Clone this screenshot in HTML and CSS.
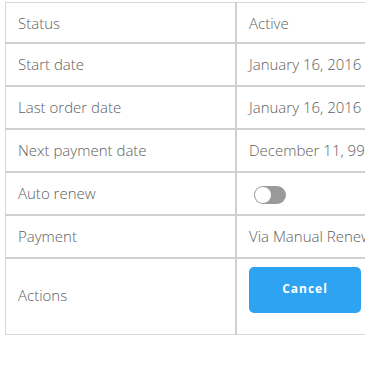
FILE: index.html
```html
<!DOCTYPE html>
<html>
<head>
    <title>Subscription</title>
    <link rel="stylesheet" href="styles.css">
</head>
<body>
    <div class="wrap">
        <table class="details">
            <tr>
                <td class="label">Status</td>
                <td>Active</td>
            </tr>
            <tr>
                <td class="label">Start date</td>
                <td>January 16, 2016</td>
            </tr>
            <tr>
                <td class="label">Last order date</td>
                <td>January 16, 2016</td>
            </tr>
            <tr>
                <td class="label">Next payment date</td>
                <td>December 11, 9999</td>
            </tr>
            <tr class="short">
                <td class="label">Auto renew</td>
                <td><span class="toggle"><span class="knob"></span></span></td>
            </tr>
            <tr>
                <td class="label">Payment</td>
                <td>Via Manual Renewal</td>
            </tr>
            <tr>
                <td class="label actions">Actions</td>
                <td class="actions"><button class="btn">Cancel</button></td>
            </tr>
        </table>
    </div>
</body>
</html>
```

FILE: styles.css
```css
body {
    margin: 0;
    font-family: "Open Sans", Arial, sans-serif;
    background: #fff;
}

.wrap {
    width: 365px;
    height: 369px;
    overflow: hidden;
    padding: 2px 0 0 5px;
    box-sizing: border-box;
}

.details {
    border-collapse: collapse;
    width: 430px;
    border: 1px solid #d8d8d8;
    font-size: 15px;
    font-weight: 300;
    color: #5e5e5e;
}

.details td {
    padding: 10px 12px 11px 12px;
    line-height: 20px;
    height: 20px;
    border-top: 2px solid #d0d0d0;
    white-space: nowrap;
    vertical-align: middle;
}

.details tr:first-child td {
    border-top: 1px solid #d8d8d8;
    padding-bottom: 9px;
}

.details tr.short td {
    padding-bottom: 10px;
}

.details td.label {
    width: 205px;
    border-right: 2px solid #d0d0d0;
}

.details td.actions {
    padding-top: 8px;
    padding-bottom: 21px;
}

.details td.label.actions {
    padding-bottom: 10px;
}

.toggle {
    display: inline-block;
    position: relative;
    width: 32px;
    height: 18px;
    border-radius: 9px;
    background: #9a9a9a;
    vertical-align: middle;
    margin-left: 5px;
}

.knob {
    position: absolute;
    left: 1px;
    top: 1px;
    width: 16px;
    height: 16px;
    border-radius: 50%;
    background: #fff;
}

.btn {
    width: 112px;
    height: 46px;
    border: none;
    border-radius: 5px;
    background: #2ea3f2;
    color: #fff;
    font-family: "Open Sans", Arial, sans-serif;
    font-weight: bold;
    font-size: 12px;
    letter-spacing: 1px;
    padding: 0 0 2px;
}
```
